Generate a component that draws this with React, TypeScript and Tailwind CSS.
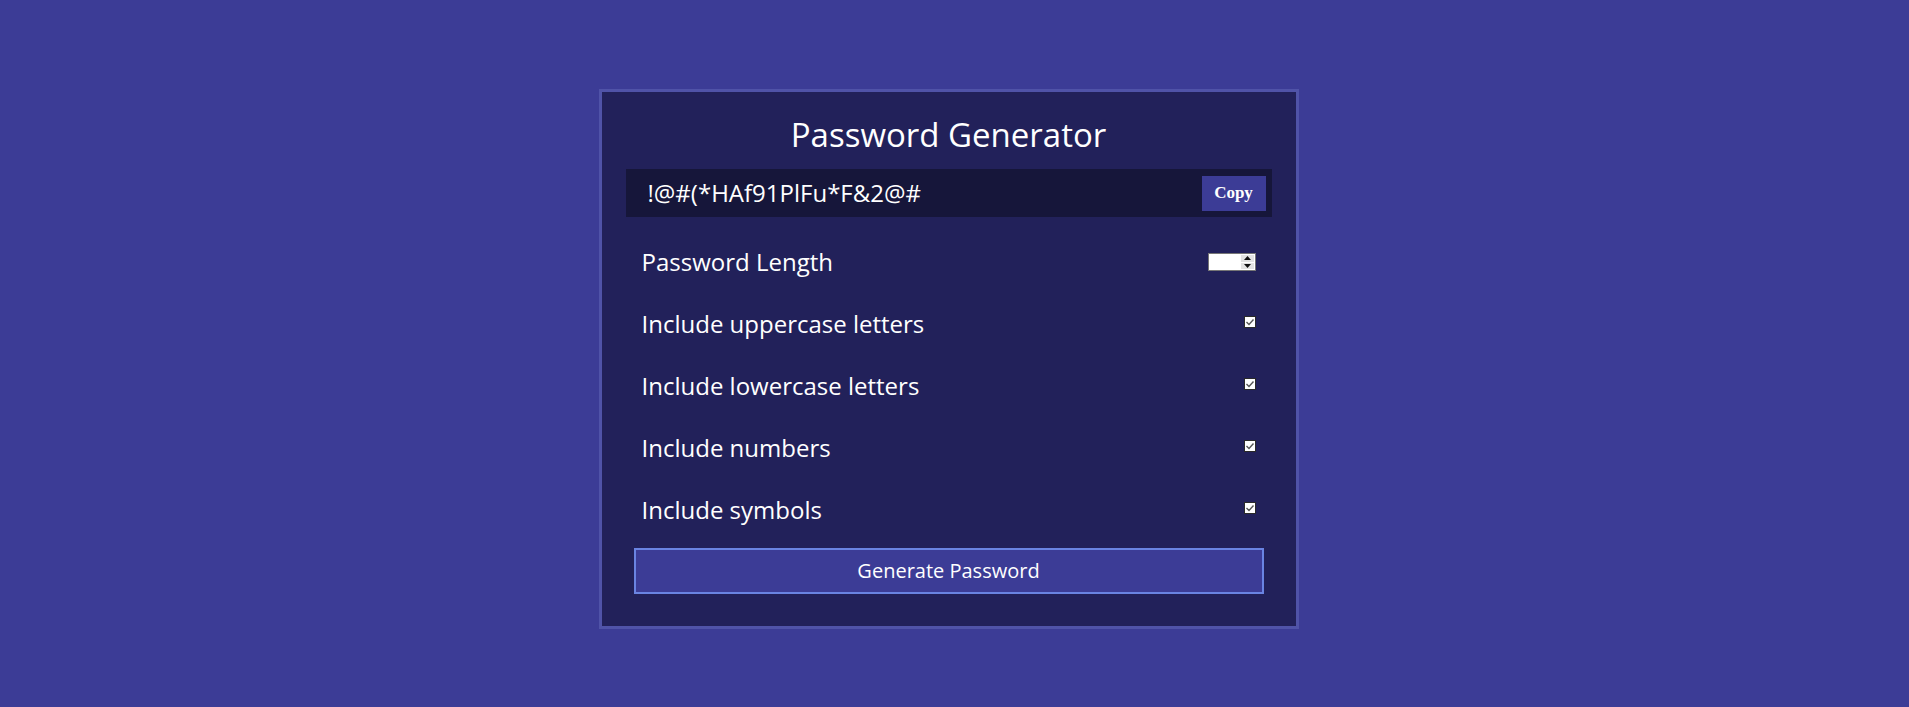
import { useState } from 'react'

// ── Fake native number input (spinner always visible, like the reference) ──
function LengthInput() {
  return (
    <div className="flex h-[18px] w-[48px] border border-[#767676] bg-white">
      <input
        type="text"
        defaultValue=""
        className="w-full min-w-0 bg-transparent px-1 text-[12px] text-black outline-none"
      />
      <div className="flex w-[15px] shrink-0 flex-col gap-px p-px">
        <div className="flex flex-1 items-center justify-center bg-[#e3e3e3]">
          <svg width="7" height="4" viewBox="0 0 7 4">
            <polygon points="3.5,0 7,4 0,4" fill="#111" />
          </svg>
        </div>
        <div className="flex flex-1 items-center justify-center bg-[#e3e3e3]">
          <svg width="7" height="4" viewBox="0 0 7 4">
            <polygon points="0,0 7,0 3.5,4" fill="#111" />
          </svg>
        </div>
      </div>
    </div>
  )
}

// ── Checkbox drawn like the old-style white box with grey tick ──
function Check({ checked, onToggle }: { checked: boolean; onToggle: () => void }) {
  return (
    <button
      onClick={onToggle}
      className="mb-1 flex h-[12px] w-[12px] items-center justify-center border border-[#2a2a2a] bg-white"
    >
      {checked && (
        <svg width="10" height="10" viewBox="0 0 10 10" fill="none">
          <polyline points="1.5,5 4,7.5 8.5,2.5" stroke="#555" strokeWidth="1.4" />
        </svg>
      )}
    </button>
  )
}

const OPTIONS = [
  'Include uppercase letters',
  'Include lowercase letters',
  'Include numbers',
  'Include symbols',
]

export default function App() {
  const [checks, setChecks] = useState([true, true, true, true])

  return (
    <div
      className="flex min-h-[707px] justify-center bg-[#3c3c96] pt-[89px] pr-[12px]"
      style={{ fontFamily: '"Open Sans", sans-serif' }}
    >
      <div className="flex h-[540px] w-[700px] flex-col border-[3px] border-[#5053a8] bg-[#22215a] px-[24px] pt-[24px]">
        <h1 className="mb-[15px] text-center text-[33px] leading-[38px] text-white">
          Password Generator
        </h1>

        {/* Result */}
        <div className="flex h-[48px] items-center justify-between bg-[#16163a] pl-[22px] pr-[6px]">
          <span className="text-[24px] leading-[30px] text-white">!@#(*HAf91PlFu*F&amp;2@#</span>
          <button className="h-[35px] w-[64px] bg-[#3c3c96] text-[17px] font-bold text-white [font-family:'Liberation_Serif',serif]">
            Copy
          </button>
        </div>

        {/* Settings */}
        <div className="mx-[16px] mt-[14px] flex flex-col">
          <div className="flex h-[62px] items-center justify-between">
            <label className="text-[24px] text-white">Password Length</label>
            <LengthInput />
          </div>
          {OPTIONS.map((label, i) => (
            <div key={label} className="flex h-[62px] items-center justify-between">
              <label className="text-[24px] text-white">{label}</label>
              <Check
                checked={checks[i]}
                onToggle={() => setChecks(c => c.map((v, j) => (j === i ? !v : v)))}
              />
            </div>
          ))}
        </div>

        <button className="mx-[8px] mt-[7px] h-[46px] border-2 border-[#6a84e2] bg-[#3c3c96] text-[20px] text-white">
          Generate Password
        </button>
      </div>
    </div>
  )
}
